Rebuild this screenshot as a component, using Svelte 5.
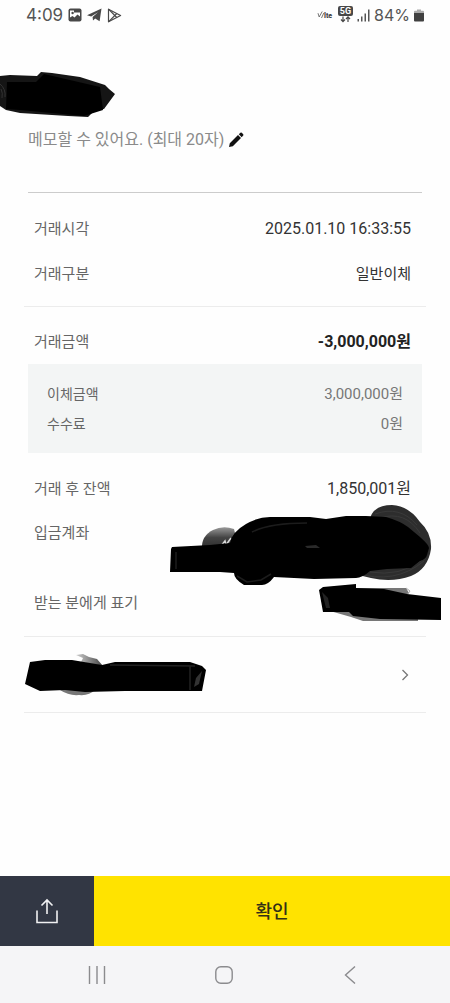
<script>
	const time = '4:09'
	const battery = '84%'

	const info = [
		{ label: '거래시각', value: '2025.01.10 16:33:55', hangul: false },
		{ label: '거래구분', value: '일반이체', hangul: true }
	]

	const amounts = [
		{ label: '이체금액', value: '3,000,000원' },
		{ label: '수수료', value: '0원' }
	]
</script>

<div class="screen">
	<div class="status">
		<span class="clock">{time}</span>
		<svg width="14" height="14" viewBox="0 0 14 14">
			<rect x="0.5" y="0.5" width="13" height="13" rx="2" fill="#484848" />
			<path d="M2 2.5h4v2h6v4L9.5 6.5 6.5 9.5 4.5 8 2 9.5z" fill="#fff" />
			<circle cx="4.6" cy="5" r="1.2" fill="#484848" />
		</svg>
		<svg width="15" height="14" viewBox="0 0 15 14">
			<path d="M0 7.2 14.5 0.5 12.6 13.2 8.2 10.5 6 12.5 5.6 9 11 4.2 4.2 8.4z" fill="#484848" />
		</svg>
		<svg width="15" height="15" viewBox="0 0 15 15" fill="none" stroke="#484848" stroke-width="1.2" stroke-linejoin="round">
			<path d="M1.5 1.2 13.6 7.5 1.5 13.8z" />
			<path d="M1.5 1.2 9.8 9.5M1.5 13.8 9.8 5.5" />
		</svg>
		<span class="space"></span>
		<div class="signals">
			<svg width="17" height="10" viewBox="0 0 17 10">
				<path d="M1 3.2 2.2 7 5.2 1.5M4.5 8 6.8 3" fill="none" stroke="#666" stroke-width="0.9" />
				<text x="7" y="8" font-size="7" font-weight="900" fill="#484848">lte</text>
			</svg>
			<svg width="15" height="18" viewBox="0 0 15 18">
				<rect x="0" y="0" width="15" height="10" rx="2" fill="#484848" />
				<text x="7.5" y="8.3" font-size="9" font-weight="700" text-anchor="middle" fill="#fff">5G</text>
				<path d="M5 10.5v5M3 13.5l2 2.2 2-2.2M10 16v-5M8 13l2-2.2 2 2.2" fill="none" stroke="#484848" stroke-width="1.2" />
			</svg>
			<svg width="13" height="13" viewBox="0 0 13 13" fill="#555">
				<path d="M0.5 10h1.5v2.5h-1.5zM4 7.5h1.5v5h-1.5zM7.5 4.5h1.5v8h-1.5zM11 0.5h1.5v12h-1.5z" />
			</svg>
			<span class="percent">{battery}</span>
			<svg width="10" height="13" viewBox="0 0 10 13">
				<path d="M3 0.5h4v1.2h2q1 0 1 1v1.8H0V2.7q0-1 1-1h2z" fill="#aaa" />
				<path d="M0 4h10v7.5q0 1-1 1H1q-1 0-1-1z" fill="#404040" />
			</svg>
		</div>
	</div>

	<main>
		<div class="name">
			<svg width="116" height="48" viewBox="0 0 116 48">
				<path d="M0 4 10 3 37 4 41 0 52 1 80 5 105 13 109 17 115 22 104 37 95 38 88 45 68 44 20 41 6 38 0 34z" fill="#151515" />
				<path d="M7 10 36 10 44 2 100 15 103 38 84 44 20 38 6 37z" fill="#000" />
				<path d="M0 12q6 5 5 13M1 17q2 4 1 9" fill="none" stroke="#333" />
			</svg>
		</div>
		<button class="memo">
			메모할 수 있어요. (최대 20자)
			<svg width="16" height="16" viewBox="0 0 16 16">
				<path d="M1 15 1.8 11.2 10 3 13 6 4.8 14.2zM10.8 2.2 12.4 0.7q.7-.5 1.4.1l1.4 1.4q.6.7 0 1.4L13.7 5.2z" fill="#111" />
			</svg>
		</button>

		<dl class="block top">
			{#each info as row}
				<div class="row">
					<dt>{row.label}</dt>
					<dd class:hangul={row.hangul}>{row.value}</dd>
				</div>
			{/each}
		</dl>

		<dl class="block total">
			<div class="row">
				<dt>거래금액</dt>
				<dd class="bold">-3,000,000원</dd>
			</div>
		</dl>

		<dl class="box">
			{#each amounts as row}
				<div class="row small">
					<dt>{row.label}</dt>
					<dd>{row.value}</dd>
				</div>
			{/each}
		</dl>

		<dl class="block rest">
			<div class="row">
				<dt>거래 후 잔액</dt>
				<dd>1,850,001원</dd>
			</div>
			<div class="row tall">
				<dt>입금계좌</dt>
				<dd>
					<svg class="account" width="262" height="82" viewBox="0 0 262 82">
						<defs>
							<linearGradient id="fade" x2="0" y2="1">
								<stop offset="0" stop-color="#999" />
								<stop offset="0.4" stop-color="#444" />
								<stop offset="1" stop-color="#222" />
							</linearGradient>
						</defs>
						<path d="M32 46Q31 33 43 27 53 22 64 26L70 50H34z" fill="url(#fade)" />
						<path d="M51 43l4-5 1 4 5-7" stroke="#ddd" stroke-width="1.5" fill="none" />
						<path d="M199 20Q201 2 222 2 239 3 250 19 262 30 261 46 258 66 241 73 222 80 201 75L180 70z" fill="#2d2d2d" />
						<path d="M205 11Q230 2 247 22M210 15Q235 7 250 30M185 70Q225 82 254 58M200 69Q230 74 252 57" fill="none" stroke="#3a3a3a" />
						<path d="M1 46 2 44 40 42 60 40Q62 29 76 21 88 14 100 14L140 14 156 16 176 13 196 13 216 14Q230 18 238 24L250 34Q259 42 259 45L257 52Q256 56 250 58L241 65 217 66 200 68Q192 75 186 75L144 76 104 74Q98 82 92 82L74 82Q64 76 64 70L50 69 0 69z" fill="#000" />
						<path d="M67 73 77 79 91 77 101 71M82 29Q100 20 137 20M6 49V66" fill="none" stroke="#1c1c1c" stroke-width="1.5" />
						<path d="M135 43 146 42 150 45 137 45z" fill="#2a2a2a" />
					</svg>
				</dd>
			</div>
			<div class="row">
				<dt>받는 분에게 표기</dt>
				<dd>
					<svg class="receiver" width="124" height="38" viewBox="0 0 124 38">
						<path d="M33 4 88 4 91 9 86 12 34 12zM12 27 33 33 45 37 100 37 100 26z" fill="#777" />
						<path d="M1 6 5 3 38 0 38 4 66 5 89 10 123 14 123 36 62 35 35 32 31 28 5 28z" fill="#000" />
						<path d="M4 8 8 24 12 24 10 14z" fill="#222" />
						<path d="M88 4l4 3-2 3" fill="none" stroke="#aaa" />
					</svg>
				</dd>
			</div>
		</dl>

		<a class="link" href="#detail" aria-label="상세">
			<svg width="182" height="44" viewBox="0 0 182 44">
				<defs>
					<linearGradient id="smear">
						<stop offset="0" stop-color="#ccc" />
						<stop offset="1" stop-color="#444" />
					</linearGradient>
				</defs>
				<path d="M51 2 58 1 64 4 72 6 78 13 56 9 58 5z" fill="url(#smear)" />
				<path d="M35 37Q44 43 54 42 64 43 70 37z" fill="#777" />
				<path d="M5 9 20 7 47 7 77 12 90 9 165 9 177 13 181 17 177 38 160 38 100 38 60 39 40 37 15 38 0 31z" fill="#000" />
				<path d="M85 12 170 13M165 13V37" stroke="#222" stroke-width="1.5" fill="none" />
				<path d="M177 18 174 31 169 34 171 25z" fill="#333" />
			</svg>
			<svg width="8" height="12" viewBox="0 0 8 12">
				<path d="M1.5 1 6.5 6 1.5 11" fill="none" stroke="#777" stroke-width="1.3" />
			</svg>
		</a>
	</main>

	<footer>
		<button class="share" aria-label="공유">
			<svg width="22" height="26" viewBox="0 0 22 26" fill="none" stroke="#f0f0f2" stroke-width="1.6">
				<path d="M1 12.5V24.5H21V12.5M11 16V2M5.5 7.5 11 2 16.5 7.5" />
			</svg>
		</button>
		<button class="confirm">확인</button>
	</footer>

	<nav>
		<button aria-label="최근">
			<svg width="18" height="18" viewBox="0 0 18 18" stroke="#8b8b8e" stroke-width="1.4">
				<path d="M1.5 0V18M9 0V18M16.5 0V18" />
			</svg>
		</button>
		<button aria-label="홈">
			<svg width="18" height="18" viewBox="0 0 18 18" fill="none" stroke="#8b8b8e" stroke-width="1.4">
				<rect x="0.8" y="0.8" width="16.4" height="16.4" rx="5" />
			</svg>
		</button>
		<button aria-label="뒤로">
			<svg width="18" height="18" viewBox="0 0 18 18" fill="none" stroke="#8b8b8e" stroke-width="1.4">
				<path d="M14 0.5 4.5 9 14 17.5" />
			</svg>
		</button>
	</nav>
</div>

<style>
	:global(body) {
		margin: 0;
		background: #fefefe;
	}

	.screen {
		display: flex;
		flex-direction: column;
		min-height: 100vh;
		color: #333;
		font-family: Roboto, "Noto Sans CJK KR", sans-serif;
		font-size: 16px;
		line-height: 24px;
	}

	svg {
		display: block;
		flex: none;
	}

	button {
		display: flex;
		align-items: center;
		justify-content: center;
		padding: 0;
		border: none;
		background: none;
		color: inherit;
		font: inherit;
		cursor: pointer;
	}

	.status {
		display: flex;
		align-items: center;
		gap: 5px;
		height: 30px;
		padding: 0 26px;
		color: #555;
	}

	.signals {
		display: flex;
		align-items: center;
		gap: 4px;
	}

	.clock, .percent {
		font-family: Inter, sans-serif;
		font-size: 16px;
	}

	.clock {
		font-size: 17px;
	}

	.space {
		flex: 1;
	}

	main {
		flex: 1;
		padding: 0 24px;
	}

	.name {
		margin: 42px -24px 0;
	}

	.memo {
		gap: 4px;
		margin: 8px 4px 40px;
		color: #8a8a8a;
	}

	dl, dd {
		margin: 0;
	}

	.block {
		padding: 0 15px 0 10px;
	}

	.row {
		display: flex;
		align-items: center;
		justify-content: space-between;
		height: 45px;
	}

	dt, .hangul {
		font-size: 15px;
	}

	dt {
		color: #666;
	}

	dd {
		position: relative;
	}

	.top {
		position: relative;
		padding-top: 14px;
		padding-bottom: 10px;
		border-bottom: 1px solid #ececec;
	}

	.top::before {
		content: '';
		position: absolute;
		top: 0;
		left: 4px;
		right: 4px;
		border-top: 1px solid #ccc;
	}

	.total {
		padding-top: 12px;
	}

	.bold {
		color: #222;
		font-weight: 700;
	}

	.box {
		margin: 0 4px;
		padding: 15px 19px 14px;
		background: #f3f5f5;
	}

	.small {
		height: 30px;
	}

	.small dt {
		font-size: 14px;
	}

	.small dd {
		color: #777;
		font-size: 15px;
	}

	.rest {
		padding-top: 13px;
		padding-bottom: 11px;
		border-bottom: 1px solid #ececec;
	}

	.tall {
		align-items: flex-start;
		height: 69px;
		line-height: 45px;
	}

	/* marker strokes run past the edge of the value column */
	.account {
		position: absolute;
		top: -8px;
		right: -21px;
	}

	.receiver {
		position: absolute;
		top: -19px;
		right: -31px;
	}

	.link {
		display: flex;
		align-items: center;
		justify-content: space-between;
		height: 75px;
		padding: 0 17px 0 1px;
		border-bottom: 1px solid #ececec;
	}

	footer {
		display: flex;
		height: 70px;
	}

	.share {
		width: 94px;
		background: #323744;
	}

	.confirm {
		flex: 1;
		padding-top: 2px;
		background: #ffe300;
		color: #333016;
		font-size: 18px;
		font-weight: 500;
	}

	nav {
		display: flex;
		justify-content: space-between;
		height: 57px;
		padding: 0 91px 0 88px;
		background: #f5f5f7;
	}
</style>
